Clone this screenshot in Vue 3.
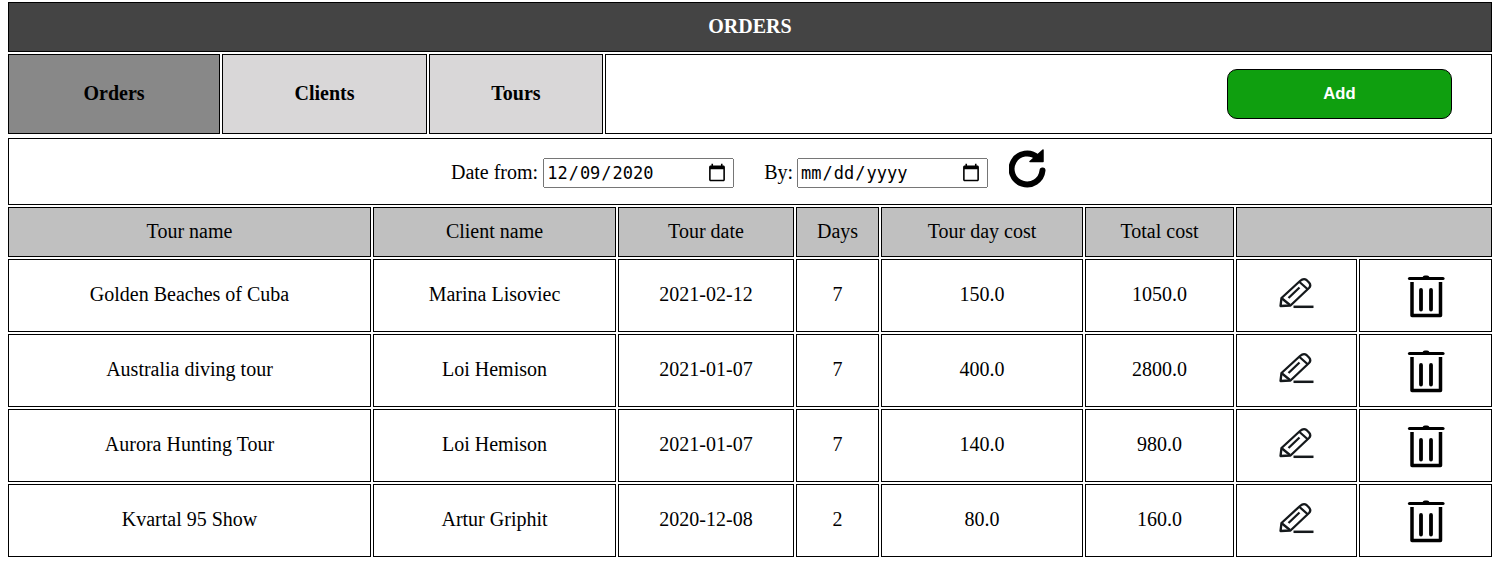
<script setup>
const orders = [
  { tour: 'Golden Beaches of Cuba', client: 'Marina Lisoviec', date: '2021-02-12', days: 7, dayCost: '150.0', total: '1050.0' },
  { tour: 'Australia diving tour', client: 'Loi Hemison', date: '2021-01-07', days: 7, dayCost: '400.0', total: '2800.0' },
  { tour: 'Aurora Hunting Tour', client: 'Loi Hemison', date: '2021-01-07', days: 7, dayCost: '140.0', total: '980.0' },
  { tour: 'Kvartal 95 Show', client: 'Artur Griphit', date: '2020-12-08', days: 2, dayCost: '80.0', total: '160.0' }
]
const columns = ['Tour name', 'Client name', 'Tour date', 'Days', 'Tour day cost', 'Total cost']
</script>

<template>
  <div class="page">
    <header class="title">ORDERS</header>

    <nav class="tabs">
      <a class="tab active">Orders</a>
      <a class="tab">Clients</a>
      <a class="tab">Tours</a>
      <div class="tab-rest">
        <button class="btn-add">Add</button>
      </div>
    </nav>

    <div class="filter">
      <label class="filter-item from">
        <span class="lbl">Date from:</span>
        <input type="date" value="2020-12-09" />
      </label>
      <label class="filter-item by">
        <span class="lbl">By:</span>
        <input type="date" />
      </label>
      <svg class="refresh" viewBox="0 0 40 40" width="40" height="40">
        <path d="M28.500 8.500A15.500 15.500 0 1 0 33.500 21.500" fill="none" stroke="#000" stroke-width="6" stroke-linecap="round" />
        <path d="M34 1V12.500H21Z" fill="#000" stroke="#000" stroke-width="1.500" stroke-linejoin="round" />
      </svg>
    </div>

    <div class="grid">
      <div v-for="c in columns" :key="c" class="cell head">{{ c }}</div>
      <div class="cell head span2"></div>

      <template v-for="o in orders" :key="o.tour">
        <div class="cell">{{ o.tour }}</div>
        <div class="cell">{{ o.client }}</div>
        <div class="cell">{{ o.date }}</div>
        <div class="cell">{{ o.days }}</div>
        <div class="cell">{{ o.dayCost }}</div>
        <div class="cell">{{ o.total }}</div>
        <div class="cell icon-cell">
          <svg viewBox="0 0 36 36" width="36" height="36" fill="none" stroke="#15191c" stroke-width="2.300">
            <path d="M1.500 28 2.500 20 21 3Q24.500 0 27.500 2L30 4.500Q32.500 7.500 30 10L11.500 27.500Z" stroke-linejoin="round" />
            <path d="M3 20.500 11 27M20.500 4 29 11.500M9.500 20 20.500 9.500" />
            <path d="M14.500 28.800H34.500" stroke-width="2.500" />
          </svg>
        </div>
        <div class="cell icon-cell">
          <svg viewBox="0 0 38 44" width="38" height="44" fill="none" stroke="#000">
            <path d="M2.500 4.500H36" stroke-width="3.200" stroke-linecap="round" />
            <path d="M15.500 4Q15.500 1.500 18 1.500H20Q22.500 1.500 22.500 4Z" fill="#000" stroke="none" />
            <path d="M5 8V41.500H33.500V8" stroke-width="3.500" stroke-linejoin="round" />
            <path d="M14 16V35.500M24 16V35.500" stroke-width="3.800" stroke-linecap="round" />
          </svg>
        </div>
      </template>
    </div>
  </div>
</template>

<style scoped>
.page {
  padding: 2px 6px 0 8px;
  font-family: "Liberation Serif", serif;
  font-size: 20px;
  color: #000;
}

.title {
  height: 50px;
  box-sizing: border-box;
  border: 1px solid #000;
  padding-bottom: 2px;
  background: #444;
  color: #fff;
  font-weight: 700;
  display: flex;
  align-items: center;
  justify-content: center;
}

.tabs {
  display: grid;
  grid-template-columns: 212px 205px 174px 1fr;
  column-gap: 2px;
  margin-top: 2px;
  height: 80px;
}

.tab {
  box-sizing: border-box;
  border: 1px solid #000;
  padding-bottom: 2px;
  background: #d9d7d8;
  font-weight: 700;
  display: flex;
  align-items: center;
  justify-content: center;
}

.tab.active {
  background: #888;
}

.tab-rest {
  box-sizing: border-box;
  border: 1px solid #000;
  display: flex;
  align-items: center;
  justify-content: flex-end;
  padding-right: 39px;
}

.btn-add {
  width: 225px;
  height: 50px;
  border: 1px solid #000;
  border-radius: 10px;
  background: #0f9f0f;
  color: #fff;
  font-family: "Liberation Sans", sans-serif;
  font-size: 16.6px;
  font-weight: 700;
}

.filter {
  box-sizing: border-box;
  margin-top: 4px;
  height: 67px;
  border: 1px solid #000;
  display: flex;
  align-items: center;
  justify-content: center;
}

.filter-item {
  display: flex;
  align-items: center;
  gap: 4px;
  margin-top: 3px;
}

.from {
  gap: 5px;
}

.by {
  margin-left: 30px;
}

.lbl {
  margin-bottom: 2px;
}

input {
  box-sizing: border-box;
  width: 191px;
  height: 30px;
  font-size: 17px;
  font-family: "DejaVu Sans Mono", monospace;
  margin: 0;
}

input::-webkit-calendar-picker-indicator {
  width: 20px;
  height: 20px;
  padding: 0;
  margin: 0 5px 0 0;
}

.refresh {
  margin-left: 21px;
  margin-top: -5px;
}

.grid {
  display: grid;
  grid-template-columns: 363px 243px 176px 83px 202px 149px 121px 133px;
  grid-template-rows: 50px repeat(4, 73px);
  gap: 2px;
  margin-top: 2px;
}

.cell {
  box-sizing: border-box;
  border: 1px solid #000;
  padding-bottom: 2px;
  display: flex;
  align-items: center;
  justify-content: center;
}

.icon-cell {
  padding-bottom: 0;
}

.head {
  background: #c0c0c0;
}

.span2 {
  grid-column: span 2;
}
</style>

<style>
html, body {
  background: #fff;
}
</style>
